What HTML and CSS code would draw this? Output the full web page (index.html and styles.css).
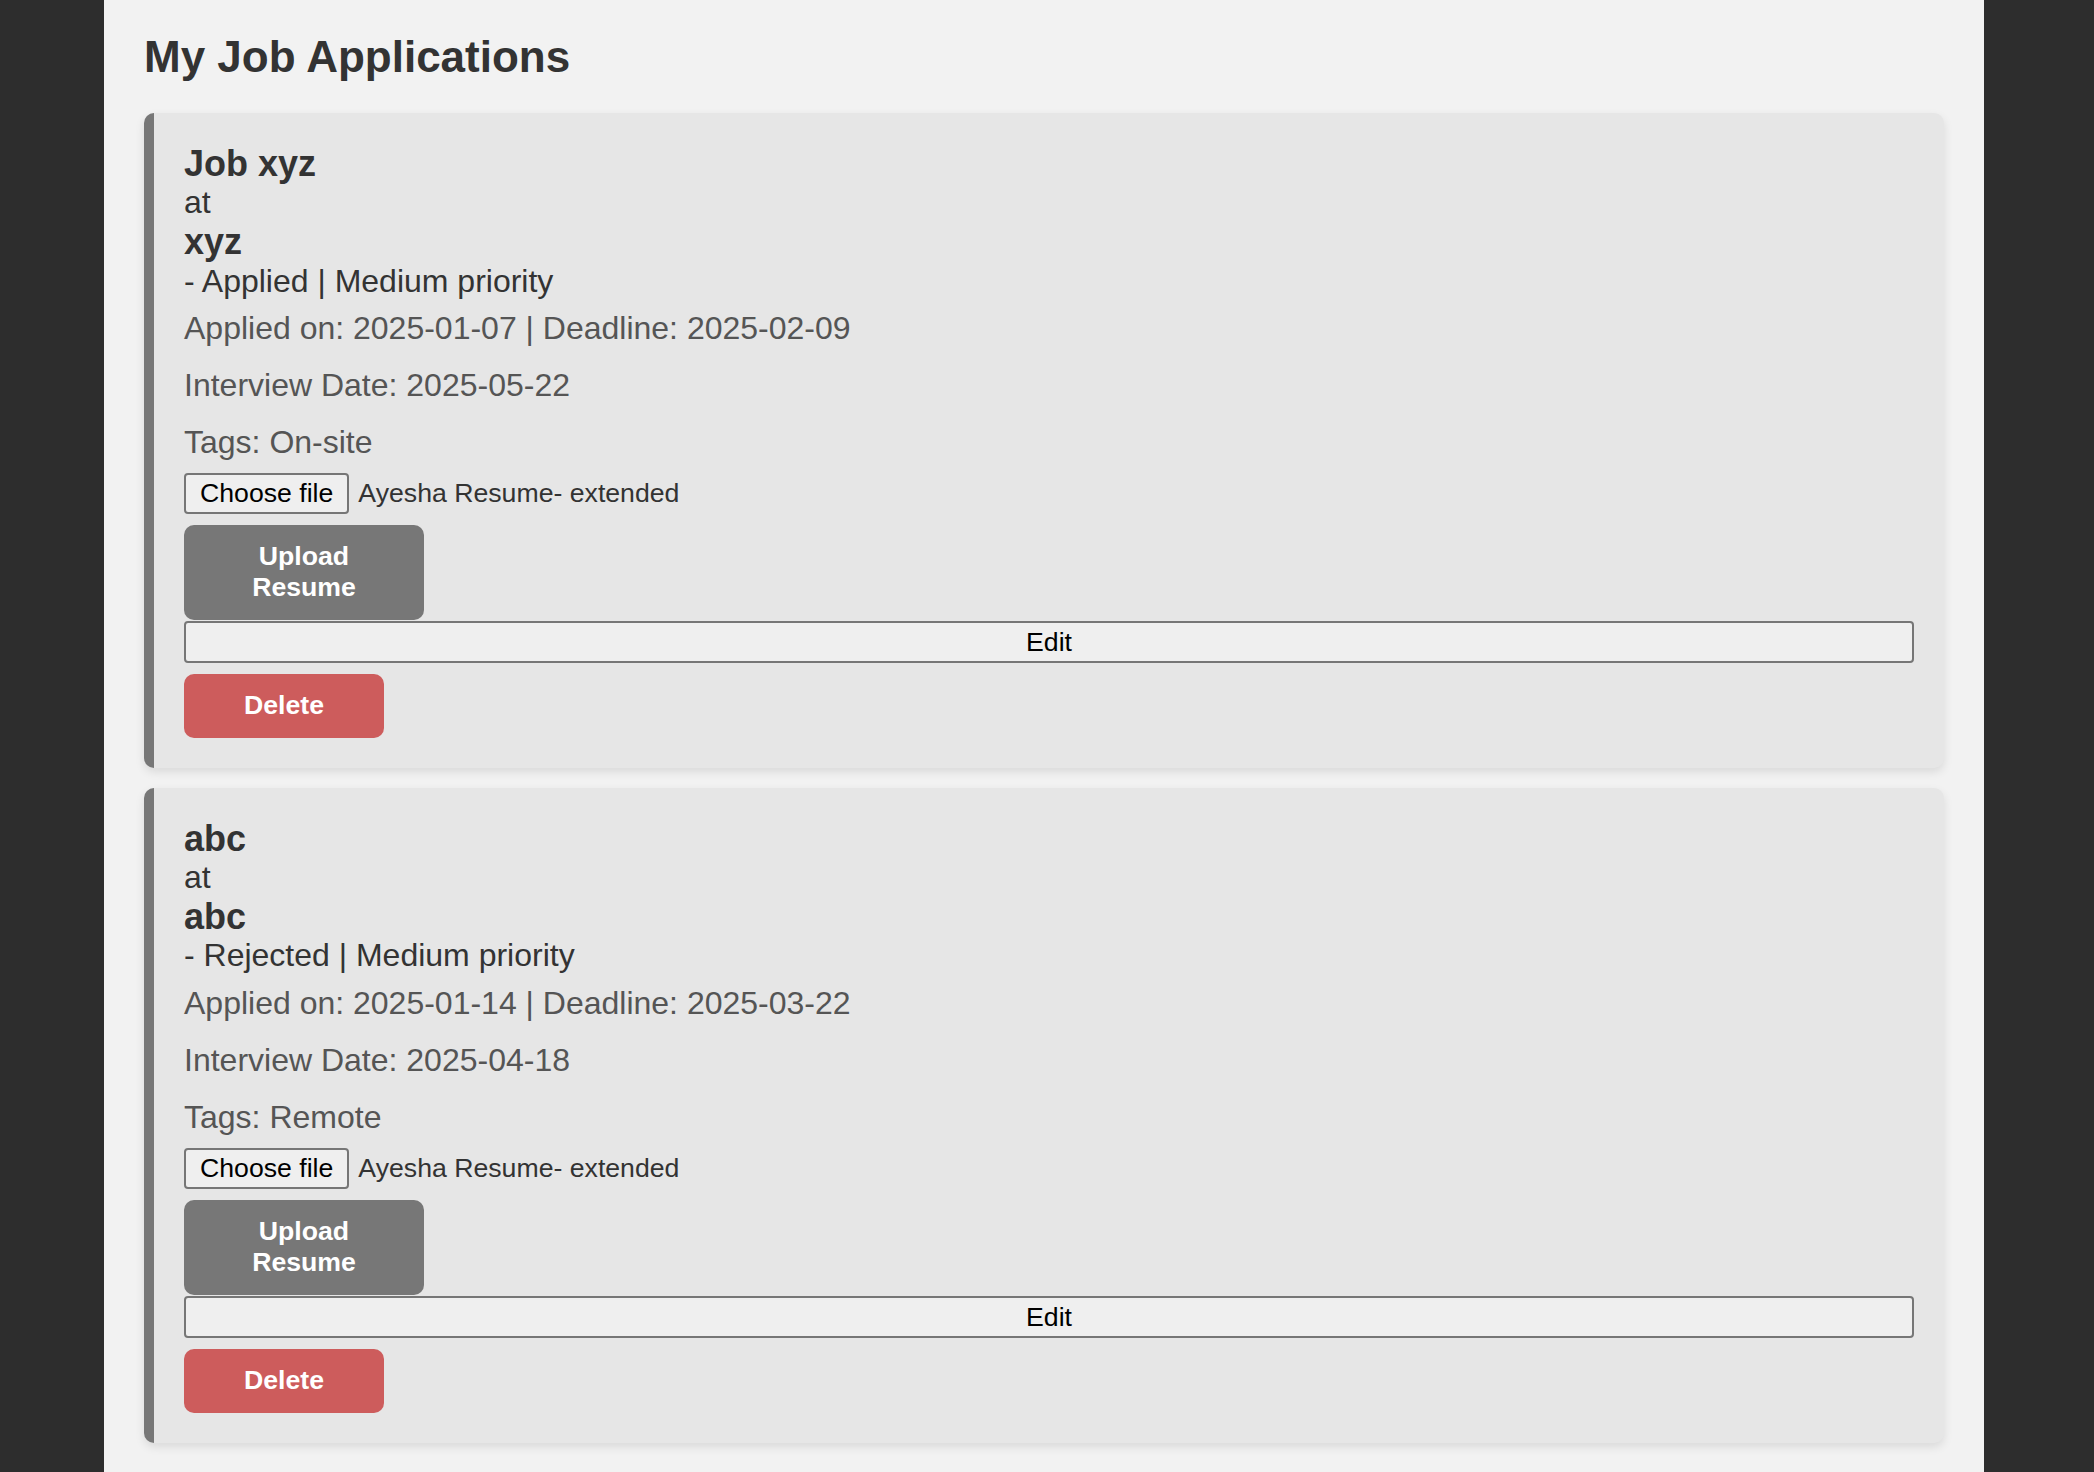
FILE: index.html
```html
<!DOCTYPE html>
<html lang="en">
<head>
<meta charset="utf-8">
<title>My Job Applications</title>
<link rel="stylesheet" href="styles.css">
</head>
<body>
<main class="container">
  <h1 class="page-title">My Job Applications</h1>

  <section class="job-card">
    <div class="job-title">Job xyz</div>
    <div class="job-line">at</div>
    <div class="job-title">xyz</div>
    <div class="job-line">- Applied | Medium priority</div>
    <div class="details">
      <p>Applied on: 2025-01-07 | Deadline: 2025-02-09</p>
      <p>Interview Date: 2025-05-22</p>
      <p>Tags: On-site</p>
    </div>
    <div class="file-row">
      <button class="file-btn" type="button">Choose file</button>
      <span class="file-name">Ayesha Resume- extended</span>
    </div>
    <button class="btn-upload" type="button">Upload Resume</button>
    <button class="btn-edit" type="button">Edit</button>
    <button class="btn-delete" type="button">Delete</button>
  </section>

  <section class="job-card">
    <div class="job-title">abc</div>
    <div class="job-line">at</div>
    <div class="job-title">abc</div>
    <div class="job-line">- Rejected | Medium priority</div>
    <div class="details">
      <p>Applied on: 2025-01-14 | Deadline: 2025-03-22</p>
      <p>Interview Date: 2025-04-18</p>
      <p>Tags: Remote</p>
    </div>
    <div class="file-row">
      <button class="file-btn" type="button">Choose file</button>
      <span class="file-name">Ayesha Resume- extended</span>
    </div>
    <button class="btn-upload" type="button">Upload Resume</button>
    <button class="btn-edit" type="button">Edit</button>
    <button class="btn-delete" type="button">Delete</button>
  </section>
</main>
</body>
</html>
```

FILE: styles.css
```css
html, body {
  margin: 0;
  padding: 0;
}

body {
  background: #2d2d2d;
  font-family: "Liberation Sans", Arial, Helvetica, sans-serif;
  color: #333;
}

.container {
  width: 1880px;
  margin-left: 104px;
  box-sizing: border-box;
  min-height: 100vh;
  background: #f2f2f2;
  padding: 31px 40px 40px;
}

.page-title {
  margin: 0 0 31px;
  font-size: 44px;
  line-height: 51px;
  font-weight: bold;
  color: #333;
}

.job-card {
  background: #e6e6e6;
  border-left: 10px solid #777;
  border-radius: 10px;
  padding: 30px;
  margin-bottom: 20px;
  box-shadow: 0 4px 10px rgba(0, 0, 0, 0.1);
}

.job-title {
  font-size: 36px;
  line-height: 41.4px;
  font-weight: bold;
  color: #333;
}

.job-line {
  font-size: 32px;
  line-height: 36.8px;
  color: #333;
}

.details {
  display: flex;
  flex-direction: column;
  gap: 20px;
  margin: 11px 0 12px;
}

.details p {
  margin: 0;
  font-size: 32px;
  line-height: 36.8px;
  color: #555;
}

.file-row {
  display: flex;
  align-items: center;
  height: 41px;
}

.file-btn {
  height: 41px;
  box-sizing: border-box;
  padding: 0 14px;
  border: 2px solid #767676;
  border-radius: 4px;
  background: #efefef;
  color: #000;
  font-family: "Liberation Sans", Arial, sans-serif;
  font-size: 26.67px;
  line-height: 30px;
}

.file-name {
  margin-left: 9px;
  font-size: 26.67px;
  color: #333;
}

.btn-upload {
  display: block;
  margin-top: 11px;
  width: 240px;
  height: 95px;
  padding: 0 32px;
  border: none;
  border-radius: 10px;
  background: #777;
  color: #fff;
  font-family: "Liberation Sans", Arial, sans-serif;
  font-size: 26.67px;
  line-height: 31px;
  font-weight: bold;
}

.btn-edit {
  display: block;
  margin-top: 1px;
  width: 100%;
  height: 42px;
  box-sizing: border-box;
  border: 2px solid #767676;
  border-radius: 4px;
  background: #efefef;
  color: #000;
  font-family: "Liberation Sans", Arial, sans-serif;
  font-size: 26.67px;
  line-height: 30px;
}

.btn-delete {
  display: block;
  margin-top: 11px;
  width: 200px;
  height: 64px;
  border: none;
  border-radius: 10px;
  background: #cd5c5c;
  color: #fff;
  font-family: "Liberation Sans", Arial, sans-serif;
  font-size: 26.67px;
  font-weight: bold;
}
```
